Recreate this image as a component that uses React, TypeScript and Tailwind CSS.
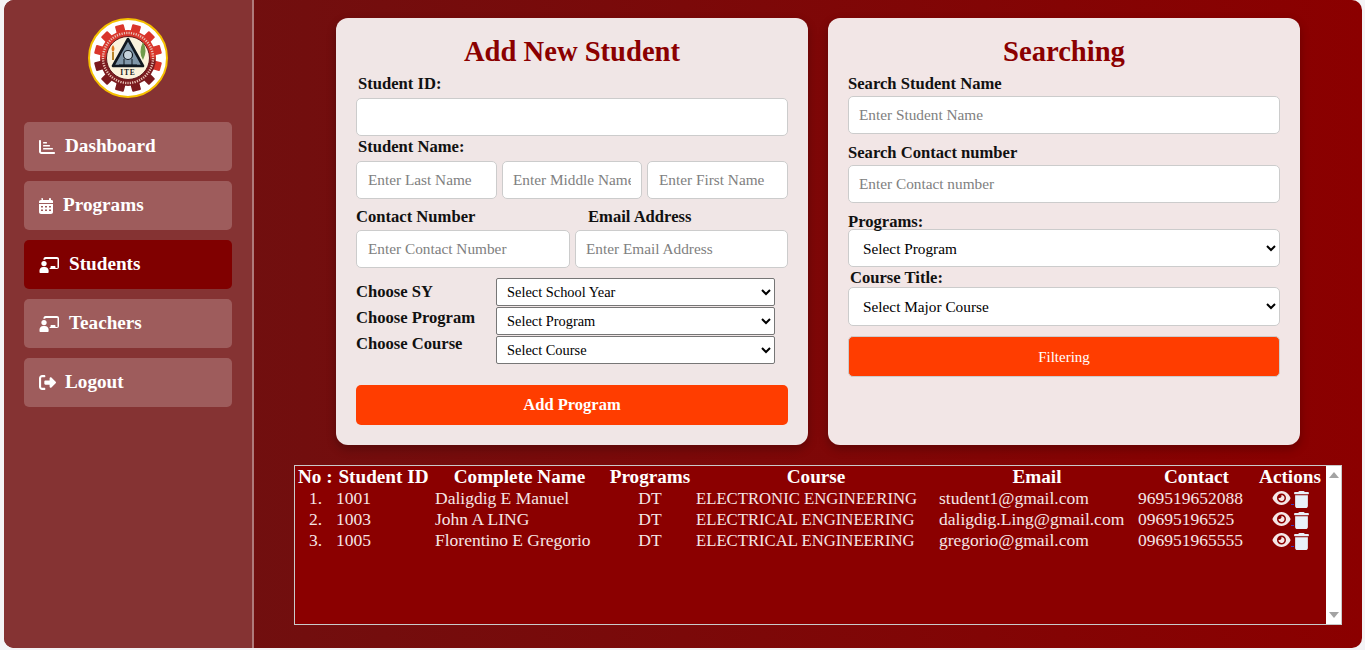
import React from "react";

const serif = "font-['Liberation_Serif',serif]";

function Gear() {
  const teeth = Array.from({ length: 12 }, (_, i) => i * 30);
  return (
    <svg width="80" height="80" viewBox="0 0 80 80" aria-hidden="true">
      <defs>
        <linearGradient id="g" x1="0" y1="0" x2="0" y2="1">
          <stop offset="0.48" stopColor="#d9352b" />
          <stop offset="0.56" stopColor="#7a1a1e" />
        </linearGradient>
      </defs>
      <circle cx="40" cy="40" r="39" fill="#ffffff" stroke="#f5c000" strokeWidth="2" />
      {teeth.map((a) => (
        <rect key={a} x="35.5" y="6" width="9" height="9" rx="1" fill={a > 95 && a < 265 ? "#7a1a1e" : "#d9352b"} transform={`rotate(${a + 15} 40 40)`} />
      ))}
      <circle cx="40" cy="40" r="28" fill="url(#g)" />
      <circle cx="40" cy="40" r="25" fill="none" stroke="#e9c4b8" strokeWidth="2.4" strokeDasharray="1.2 1.2" />
      <circle cx="40" cy="40" r="21.5" fill="#fbf3dc" stroke="#5e1a1e" strokeWidth="1" />
      <path d="M25 48 L40 21 L55 48 Z" fill="#7f96a8" stroke="#111820" strokeWidth="2.6" strokeLinejoin="round" />
      <circle cx="40" cy="37" r="4.5" fill="#c6d4dd" stroke="#111820" strokeWidth="1.2" />
      <path d="M31 47 h18 M36 41 v6 M44 41 v6" stroke="#111820" strokeWidth="1" />
      <text x="40" y="56.5" textAnchor="middle" fontSize="7.5" fontWeight="700" fontFamily="Liberation Serif, serif" fill="#1a1a1a" letterSpacing="0.8">ITE</text>
      <path d="M55 24 q5 8 0 18 q-5 -8 0 -18" fill="#6f9b4a" />
      <path d="M25 27 q3 4 0 7 q-3 -3 0 -7" fill="#e07a1f" />
      <rect x="24" y="34" width="2" height="8" fill="#b8862b" />
    </svg>
  );
}

function IconChart() {
  return (
    <svg width="16" height="14" viewBox="0 0 512 448" fill="currentColor" aria-hidden="true">
      <path d="M32 0c18 0 32 14 32 32v336c0 9 7 16 16 16h400c18 0 32 14 32 32s-14 32-32 32H80c-44 0-80-36-80-80V32C0 14 14 0 32 0z" />
      <rect x="128" y="64" width="128" height="48" rx="20" />
      <rect x="128" y="160" width="224" height="48" rx="20" />
      <rect x="128" y="256" width="320" height="48" rx="20" />
    </svg>
  );
}
function IconCal() {
  return (
    <svg width="14" height="16" viewBox="0 0 448 512" fill="currentColor" aria-hidden="true">
      <path fillRule="evenodd" d="M96 0c18 0 32 14 32 32v32h192V32c0-18 14-32 32-32s32 14 32 32v32h16c35 0 64 29 64 64v32H0v-32c0-35 29-64 64-64h16V32C64 14 78 0 96 0zM0 192h448v256c0 35-29 64-64 64H64c-35 0-64-29-64-64V192zm64 64v48h64v-48H64zm128 0v48h64v-48h-64zm128 0v48h64v-48h-64zM64 368v48h64v-48H64zm128 0v48h64v-48h-64zm128 0v48h64v-48h-64z" />
    </svg>
  );
}
function IconTeacher() {
  return (
    <svg width="21" height="16" viewBox="0 0 640 512" fill="currentColor" aria-hidden="true">
      <path d="M192 0c-35 0-64 29-64 64v30c19-11 41-18 64-18V64h384v288h-64v-32c0-18-14-32-32-32h-96c-18 0-32 14-32 32v32h-34c6 10 10 20 13 32h229c35 0 64-29 64-64V64c0-35-29-64-64-64H192z" />
      <circle cx="144" cy="208" r="84" />
      <path d="M116 320h56c66 0 120 54 120 120v48c0 13-11 24-24 24H20c-13 0-20-11-20-24v-48c0-66 50-120 116-120z" />
    </svg>
  );
}
function IconLogout() {
  return (
    <svg width="17" height="15" viewBox="0 0 512 448" fill="currentColor" aria-hidden="true">
      <path d="M160 64c18 0 32-14 32-32S178 0 160 0H96C43 0 0 43 0 96v256c0 53 43 96 96 96h64c18 0 32-14 32-32s-14-32-32-32H96c-18 0-32-14-32-32V96c0-18 14-32 32-32h64z" />
      <path d="M502 246c13-12 13-32 0-44L374 74c-9-9-23-12-35-7s-20 17-20 30v63H192c-18 0-32 14-32 32v64c0 18 14 32 32 32h127v63c0 13 8 25 20 30s26 2 35-7l128-128z" />
    </svg>
  );
}
function IconEye() {
  return (
    <svg width="19" height="14" viewBox="0 0 576 448" fill="currentColor" aria-hidden="true">
      <path fillRule="evenodd" d="M288 0C207 0 142 37 95 81 48 124 17 176 2 212c-3 8-3 16 0 24 15 36 46 88 93 131 47 44 112 81 193 81s146-37 193-81c47-43 78-95 93-131 3-8 3-16 0-24-15-36-46-88-93-131C434 37 369 0 288 0zM144 224a144 144 0 1 1 288 0 144 144 0 1 1-288 0zm144-64c0 35-29 64-64 64-7 0-14-1-20-3-6-2-12 2-12 8 0 7 1 14 3 21 14 51 66 82 118 68s82-66 68-118c-11-42-48-70-89-72-6 0-9 6-7 12 2 6 3 13 3 20z" />
    </svg>
  );
}
function IconTrash() {
  return (
    <svg width="15" height="17" viewBox="0 0 448 512" fill="#e9f1fa" aria-hidden="true">
      <path d="M135 18C140 7 151 0 163 0h122c12 0 23 7 28 18l7 14h96c18 0 32 14 32 32s-14 32-32 32H32C14 96 0 82 0 64s14-32 32-32h96l7-14zM32 128h384v320c0 35-29 64-64 64H96c-35 0-64-29-64-64V128z" />
    </svg>
  );
}

function NavItem({ icon, label, active, gap }: { icon: React.ReactNode; label: string; active?: boolean; gap: string }) {
  return (
    <a className={`flex h-[49px] items-center rounded-[5px] pl-[15px] text-[19.2px] font-bold text-white ${gap} ${active ? "bg-[#800000]" : "bg-[#9e5c5c]"}`}>
      {icon}
      <span>{label}</span>
    </a>
  );
}

const inputBase =
  "h-[38px] min-w-0 rounded-[5px] border border-[#cccccc] bg-white text-[15.3px] text-black outline-none placeholder:text-[#808080] font-['Liberation_Serif',serif]";
const inputCls = `${inputBase} px-[11px]`;
const searchInput = `${inputBase} mt-[4px] w-full px-[10px]`;
const textBold = "text-[16.6px] font-bold leading-[18px] text-[#111111]";
const labelCls = `block h-[18px] pt-px ${textBold}`;
const smallSelect = "rounded-[2px] border border-[#767676] bg-white px-[6px] text-[14.4px] text-black";
const bigSelect = "block w-full rounded-[5px] border border-[#cccccc] bg-white px-[10px] text-[15.3px] text-black";

const rows = [
  ["1.", "1001", "Daligdig E Manuel", "DT", "ELECTRONIC ENGINEERING", "student1@gmail.com", "969519652088"],
  ["2.", "1003", "John A LING", "DT", "ELECTRICAL ENGINEERING", "daligdig.Ling@gmail.com", "09695196525"],
  ["3.", "1005", "Florentino E Gregorio", "DT", "ELECTRICAL ENGINEERING", "gregorio@gmail.com", "096951965555"],
];

const cols = "grid grid-cols-[39px_99px_173px_88px_244px_198px_121px_66px]";

export default function App() {
  return (
    <div className={`h-[650px] w-[1365px] overflow-hidden bg-[#f4f4f6] pb-[2px] pl-[4px] pr-[3px] ${serif}`}>
      <div className="flex h-[648px] overflow-hidden rounded-[10px] bg-[linear-gradient(90deg,#6b1212_0%,#8b0000_100%)]">
        <aside className="flex w-[250px] shrink-0 flex-col border-r-2 border-[#b07a7a] bg-[#853333] px-[20px] pt-[18px]">
          <div className="mb-[24px] flex justify-center">
            <Gear />
          </div>
          <nav className="flex flex-col gap-[10px]">
            <NavItem icon={<IconChart />} label="Dashboard" gap="gap-[10px]" />
            <NavItem icon={<IconCal />} label="Programs" gap="gap-[10px]" />
            <NavItem icon={<IconTeacher />} label="Students" active gap="gap-[9px]" />
            <NavItem icon={<IconTeacher />} label="Teachers" gap="gap-[9px]" />
            <NavItem icon={<IconLogout />} label="Logout" gap="gap-[9px]" />
          </nav>
        </aside>

        <main className="min-w-0 flex-1 pl-[82px] pt-[18px]">
          <div className="flex items-start gap-[20px]">
            <section className="h-[427px] w-[472px] rounded-[12px] bg-[#f0e6e6] px-[20px] pt-[18px] shadow-[0_4px_10px_rgba(0,0,0,0.25)]">
              <h2 className="text-center text-[28.6px] font-bold leading-[32px] text-[#8b0000]">Add New Student</h2>
              <label className={`${labelCls} mt-[6px] pl-[2px]`}>Student ID:</label>
              <input className={`${inputCls} mt-[6px] w-full`} />
              <label className={`${labelCls} mt-px pl-[2px]`}>Student Name:</label>
              <div className="mt-[6px] flex gap-[5px]">
                <input className={`${inputCls} w-[141px]`} placeholder="Enter Last Name" />
                <input className={`${inputBase} w-[140px] px-[10px]`} placeholder="Enter Middle Name" />
                <input className={`${inputCls} w-[141px]`} placeholder="Enter First Name" />
              </div>
              <div className="mt-[4px] flex h-[27px] items-center pt-px">
                <span className={`${textBold} w-[232px]`}>Contact Number</span>
                <span className={textBold}>Email Address</span>
              </div>
              <div className="flex gap-[5px]">
                <input className={`${inputCls} w-[214px]`} placeholder="Enter Contact Number" />
                <input className={`${inputBase} w-[213px] px-[10px]`} placeholder="Enter Email Address" />
              </div>
              <div className="mt-[10px] flex">
                <div className="flex w-[140px] flex-col gap-[8px] pt-[5px]">
                  <div className={textBold}>Choose SY</div>
                  <div className={textBold}>Choose Program</div>
                  <div className={textBold}>Choose Course</div>
                </div>
                <div className="flex w-[279px] flex-col gap-px">
                  <select className={`${smallSelect} h-[28px]`}><option>Select School Year</option></select>
                  <select className={`${smallSelect} h-[28px]`}><option>Select Program</option></select>
                  <select className={`${smallSelect} h-[28px]`}><option>Select Course</option></select>
                </div>
              </div>
              <button className="mt-[21px] h-[40px] w-full rounded-[5px] bg-[#ff3d00] text-[16.5px] font-bold text-white">Add Program</button>
            </section>

            <section className="h-[427px] w-[472px] rounded-[12px] bg-[#f2e6e6] px-[20px] pt-[18px] shadow-[0_4px_10px_rgba(0,0,0,0.25)]">
              <h2 className="text-center text-[28.6px] font-bold leading-[32px] text-[#8b0000]">Searching</h2>
              <label className={`${labelCls} mt-[6px]`}>Search Student Name</label>
              <input className={searchInput} placeholder="Enter Student Name" />
              <label className={`${labelCls} mt-[9px]`}>Search Contact number</label>
              <input className={searchInput} placeholder="Enter Contact number" />
              <label className={`${labelCls} mt-[9px]`}>Programs:</label>
              <select className={`${bigSelect} mt-[-1px] h-[38px]`}><option>Select Program</option></select>
              <label className={`${labelCls} mt-px pl-[2px]`}>Course Title:</label>
              <select className={`${bigSelect} mt-px h-[39px]`}><option>Select Major Course</option></select>
              <button className="mt-[10px] h-[41px] w-full rounded-[5px] border border-[#cccccc] bg-[#ff3d00] pt-px text-[15px] text-white">Filtering</button>
            </section>
          </div>

          <div className="ml-[-42px] mt-[20px] flex h-[160px] w-[1048px] border border-[#c9c9c9] bg-[#8b0000]">
            <div className="min-w-0 flex-1 text-[#f5e6e6]">
              <div className={`${cols} h-[22px] items-center text-center text-[19.2px] font-bold leading-[22px] text-white`}>
                <div className="whitespace-nowrap pl-[3px] text-left">No :</div>
                <div>Student ID</div>
                <div>Complete Name</div>
                <div>Programs</div>
                <div>Course</div>
                <div>Email</div>
                <div>Contact</div>
                <div>Actions</div>
              </div>
              {rows.map((r) => (
                <div key={r[1]} className={`${cols} h-[21px] items-center text-[17.5px] leading-[21px]`}>
                  <div className="pl-[14px]">{r[0]}</div>
                  <div className="pl-[2px]">{r[1]}</div>
                  <div className="pl-[2px]">{r[2]}</div>
                  <div className="text-center">{r[3]}</div>
                  <div className="pl-[2px] text-[16.7px]">{r[4]}</div>
                  <div className="pl-px">{r[5]}</div>
                  <div className="pl-[2px]">{r[6]}</div>
                  <div className="flex items-start justify-center pt-px">
                    <IconEye />
                    <span className="mt-[13px] h-px w-[3px] bg-[#3a3ac8]" />
                    <IconTrash />
                  </div>
                </div>
              ))}
            </div>
            <div className="flex w-[15px] shrink-0 flex-col items-center justify-between bg-white py-[6px]">
              <span className="h-0 w-0 border-x-[5px] border-b-[6px] border-x-transparent border-b-[#a3a3a3]" />
              <span className="h-0 w-0 border-x-[5px] border-t-[6px] border-x-transparent border-t-[#a3a3a3]" />
            </div>
          </div>
        </main>
      </div>
    </div>
  );
}
